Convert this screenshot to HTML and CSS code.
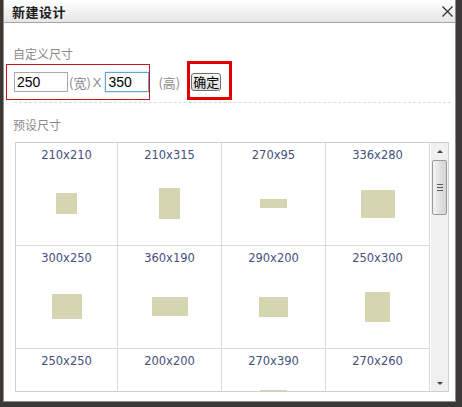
FILE: index.html
```html
<!DOCTYPE html>
<html lang="zh-CN">
<head>
    <meta charset="UTF-8">
    <title>新建设计</title>
    <link rel="stylesheet" href="styles.css">
</head>
<body>
    <div class="dialog">
        <div class="titlebar">
            <span class="title">新建设计</span>
            <svg class="close" width="11" height="11" viewBox="0 0 11 11">
                <path d="M0.5 0.5 L10.5 10.5 M10.5 0.5 L0.5 10.5" stroke="#333" stroke-width="1.3" fill="none"/>
            </svg>
        </div>

        <div class="content">
            <div class="section-label">自定义尺寸</div>
            <div class="custom-row">
                <input class="size-input" type="text" value="250">
                <span class="unit">(宽)</span>
                <span class="times">X</span>
                <input class="size-input focused" type="text" value="350">
                <span class="unit">(高)</span>
                <button class="ok-btn">确定</button>
                <div class="mark mark-inputs"></div>
                <div class="mark mark-button"></div>
            </div>
            <div class="divider"></div>

            <div class="section-label">预设尺寸</div>
            <div class="presets">
                <div class="preset-grid">
                    <div class="cell"><div class="cell-label">210x210</div><div class="cell-box"><div class="thumb" style="width:21px;height:21px"></div></div></div>
                    <div class="cell"><div class="cell-label">210x315</div><div class="cell-box"><div class="thumb" style="width:21px;height:31px"></div></div></div>
                    <div class="cell"><div class="cell-label">270x95</div><div class="cell-box"><div class="thumb" style="width:27px;height:9px"></div></div></div>
                    <div class="cell"><div class="cell-label">336x280</div><div class="cell-box"><div class="thumb" style="width:34px;height:28px"></div></div></div>
                    <div class="cell"><div class="cell-label">300x250</div><div class="cell-box"><div class="thumb" style="width:30px;height:25px"></div></div></div>
                    <div class="cell"><div class="cell-label">360x190</div><div class="cell-box"><div class="thumb" style="width:36px;height:19px"></div></div></div>
                    <div class="cell"><div class="cell-label">290x200</div><div class="cell-box"><div class="thumb" style="width:29px;height:20px"></div></div></div>
                    <div class="cell"><div class="cell-label">250x300</div><div class="cell-box"><div class="thumb" style="width:25px;height:30px"></div></div></div>
                    <div class="cell"><div class="cell-label">250x250</div><div class="cell-box"><div class="thumb" style="width:25px;height:25px"></div></div></div>
                    <div class="cell"><div class="cell-label">200x200</div><div class="cell-box"><div class="thumb" style="width:20px;height:20px"></div></div></div>
                    <div class="cell"><div class="cell-label">270x390</div><div class="cell-box"><div class="thumb" style="width:27px;height:39px"></div></div></div>
                    <div class="cell"><div class="cell-label">270x260</div><div class="cell-box"><div class="thumb" style="width:27px;height:26px"></div></div></div>
                </div>
                <div class="scrollbar">
                    <div class="arrow up"></div>
                    <div class="thumb-bar"><span class="grip"></span></div>
                    <div class="track"></div>
                    <div class="arrow down"></div>
                </div>
            </div>
        </div>
    </div>
</body>
</html>
```

FILE: styles.css
```css
body {
    margin: 0;
    background-color: #3b3835;
    font-family: "Noto Sans CJK SC", "DejaVu Sans", sans-serif;
}
.dialog {
    box-sizing: border-box;
    width: 453px;
    height: 402px;
    margin-left: 3px;
    background-color: #ffffff;
    border: 1px solid #8e8e8e;
    border-top: none;
}
.titlebar {
    display: flex;
    align-items: center;
    justify-content: space-between;
    height: 22px;
    padding: 0 2px 0 8px;
    background: linear-gradient(#ffffff, #e6e6e6);
    border-bottom: 1px solid #a6a6a6;
}
.title {
    font-size: 13px;
    font-weight: bold;
    color: #1e1e1e;
    letter-spacing: 0.5px;
}
.close {
    margin-top: 1px;
}
.content {
    padding: 0 0 0 10px;
}
.section-label {
    font-size: 12px;
    line-height: 16px;
    color: #8a8a8a;
    margin-top: 23px;
    margin-left: -1px;
}
.custom-row {
    position: relative;
    display: flex;
    align-items: center;
    height: 20px;
    margin-top: 10px;
}
.size-input {
    box-sizing: border-box;
    width: 54px;
    height: 20px;
    padding: 0 2px;
    margin: 0;
    border: 1px solid #a9a9a9;
    font-family: "Liberation Sans", sans-serif;
    font-size: 14px;
    color: #000;
    outline: none;
}
.size-input.focused {
    width: 44px;
    border-color: #5ea6d6;
    box-shadow: 0 0 2px #9ccbe8;
}
.unit {
    font-size: 13px;
    color: #8a8a8a;
    margin-left: 1px;
}
.times {
    font-family: "Liberation Sans", sans-serif;
    font-size: 13px;
    color: #8a8a8a;
    margin: 0 4px 0 2px;
}
.unit + .ok-btn {
    margin-left: 11px;
}
.size-input.focused + .unit {
    margin-left: 9px;
}
.ok-btn {
    box-sizing: border-box;
    height: 18px;
    padding: 0 1px;
    font-family: "Noto Sans CJK SC", sans-serif;
    font-size: 13px;
    line-height: 14px;
    color: #000;
    background: linear-gradient(#f6f6f6, #d9d9d9);
    border: 1px solid #707070;
    border-radius: 3px;
}
.mark {
    position: absolute;
    box-sizing: border-box;
    border: solid #d00000;
}
.mark-inputs {
    left: -8px;
    top: -8px;
    width: 144px;
    height: 36px;
    border-width: 1px;
    border-color: #c4161c;
}
.mark-button {
    left: 173px;
    top: -11px;
    width: 45px;
    height: 39px;
    border-width: 3px;
    border-color: #e00000;
}
.divider {
    margin: 10px 0 0 0;
    width: 437px;
    border-top: 1px dashed #dcdcdc;
}
.divider + .section-label {
    margin-top: 14px;
}
.presets {
    display: flex;
    width: 432px;
    height: 248px;
    margin-top: 9px;
    margin-left: 1px;
    border: 1px solid #cfcfcf;
    overflow: hidden;
}
.preset-grid {
    display: grid;
    grid-template-columns: 102px 104px 104px 104px;
    grid-auto-rows: 103px;
    align-content: start;
}
.cell {
    box-sizing: border-box;
    display: flex;
    flex-direction: column;
    border-right: 1px solid #d9d9d9;
    border-bottom: 1px solid #d9d9d9;
    padding-top: 5px;
}
.cell-label {
    font-family: "DejaVu Sans", sans-serif;
    font-size: 11.5px;
    line-height: 14px;
    text-align: center;
    color: #44507c;
}
.cell-box {
    flex: 1;
    display: flex;
    align-items: center;
    justify-content: center;
}
.thumb {
    background-color: #d6d5b1;
}
.scrollbar {
    display: flex;
    flex-direction: column;
    width: 17px;
    margin-left: 1px;
    background-color: #f0f0f0;
}
.arrow {
    height: 16px;
    display: flex;
    align-items: center;
    justify-content: center;
}
.arrow::before {
    content: "";
    border-left: 3px solid transparent;
    border-right: 3px solid transparent;
}
.arrow.up::before {
    border-bottom: 3px solid #404040;
}
.arrow.down::before {
    border-top: 3px solid #404040;
}
.thumb-bar {
    box-sizing: border-box;
    height: 55px;
    margin: 1px 1px 0 1px;
    border: 1px solid #9a9a9a;
    border-radius: 2px;
    background: linear-gradient(90deg, #f4f4f4, #e2e2e2 50%, #d4d4d4);
    display: flex;
    align-items: center;
    justify-content: center;
}
.grip {
    width: 6px;
    height: 7px;
    background: repeating-linear-gradient(#5a5a5a 0 1px, transparent 1px 3px);
}
.track {
    flex: 1;
}
```
